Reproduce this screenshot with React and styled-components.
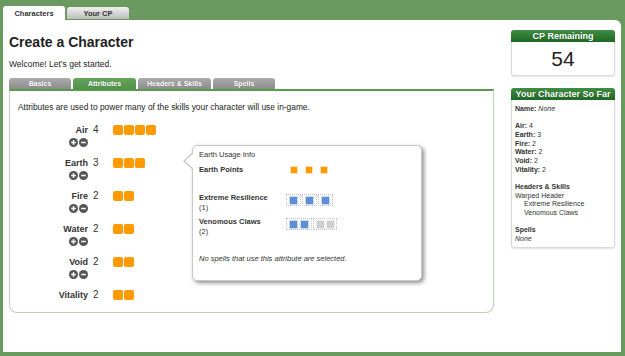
import React from 'react';
import styled, { createGlobalStyle } from 'styled-components';

const Global = createGlobalStyle`
  html, body { margin: 0; padding: 0; }
  body {
    background: #6a9a60;
    font-family: "Liberation Sans", Arial, sans-serif;
    color: #222;
    width: 625px;
    height: 356px;
    overflow: hidden;
  }
`;

const Page = styled.div`
  width: 625px;
  height: 356px;
  display: flex;
  flex-direction: column;
`;

const TopTabs = styled.div`
  height: 20px;
  display: flex;
  align-items: flex-end;
  gap: 2px;
  padding-left: 3px;
`;

const TopTab = styled.div`
  width: 62px;
  height: ${(p) => (p.$active ? 14 : 12)}px;
  margin-bottom: ${(p) => (p.$active ? 0 : 1)}px;
  border-radius: 3px 3px 0 0;
  background: ${(p) => (p.$active ? '#fff' : 'linear-gradient(#f0f0f0, #bdbdbd)')};
  font-size: 7.5px;
  font-weight: bold;
  color: #333;
  display: flex;
  align-items: center;
  justify-content: center;
`;

const Panel = styled.div`
  height: 332px;
  margin: 0 4px 0 3px;
  background: #fff;
  border-top-right-radius: 6px;
  display: flex;
  gap: 17px;
  padding: 10px 6px 0 6px;
  box-sizing: border-box;
`;

const Main = styled.div`
  width: 485px;
  display: flex;
  flex-direction: column;
`;

const Heading = styled.h1`
  margin: 4px 0 0;
  font-size: 14px;
  line-height: 16px;
  font-weight: bold;
  color: #1e1e1e;
`;

const Welcome = styled.p`
  margin: 8.5px 0 0;
  font-size: 8.5px;
  line-height: 11px;
`;

const Tabs = styled.div`
  margin-top: 8.5px;
  display: flex;
  gap: 2px;
  height: 11px;
`;

const Tab = styled.div`
  width: ${(p) => p.$w}px;
  height: 11px;
  border-radius: 3px 3px 0 0;
  background: ${(p) => (p.$active ? 'linear-gradient(#66a65d, #4f9146)' : 'linear-gradient(#acacac, #8c8c8c)')};
  color: #fff;
  font-size: 7px;
  font-weight: bold;
  display: flex;
  align-items: center;
  justify-content: center;
  text-shadow: 0 0 1px rgba(0, 0, 0, 0.3);
`;

const Box = styled.div`
  position: relative;
  height: 224px;
  box-sizing: border-box;
  border: 1px solid #bad4b3;
  border-top: 2px solid #5a9a50;
  border-radius: 0 0 8px 8px;
  padding-top: 11px;
`;

const Intro = styled.p`
  margin: 0 0 12px;
  padding-left: 8px;
  font-size: 8.4px;
  line-height: 10px;
`;

const AttrRow = styled.div`
  height: 33px;
  display: grid;
  grid-template-columns: 78px 25px 1fr;
  align-items: start;
`;

const LabelCell = styled.div`
  display: flex;
  flex-direction: column;
  align-items: flex-end;
`;

const AttrLabel = styled.div`
  font-size: 9px;
  font-weight: bold;
  line-height: 12px;
  color: #333;
`;

const Controls = styled.div`
  display: flex;
  gap: 1px;
  margin-top: 1.5px;
`;

const AttrValue = styled.div`
  padding-left: 5px;
  font-size: 10px;
  line-height: 12px;
  color: #333;
`;

const Pips = styled.div`
  display: flex;
  gap: 1px;
  margin-top: 1px;
`;

const Pip = styled.div`
  width: 10px;
  height: 10px;
  border-radius: 2px;
  background: #ff9a00;
`;

const Popover = styled.div`
  position: absolute;
  left: 182px;
  top: 54px;
  width: 230px;
  height: 136px;
  box-sizing: border-box;
  background: #fff;
  border: 1px solid #c8c8c8;
  border-radius: 5px;
  box-shadow: 2px 2px 4px rgba(0, 0, 0, 0.45);
  padding: 4px 6px;
  font-size: 7.5px;
  color: #333;

  &::before {
    content: '';
    position: absolute;
    left: -10px;
    top: 6px;
    border-style: solid;
    border-width: 9px 10px 9px 0;
    border-color: transparent #c8c8c8 transparent transparent;
  }
  &::after {
    content: '';
    position: absolute;
    left: -8.5px;
    top: 7px;
    border-style: solid;
    border-width: 8px 9px 8px 0;
    border-color: transparent #fff transparent transparent;
  }
`;

const PopTitle = styled.div`
  line-height: 10px;
`;

const PopRow = styled.div`
  display: grid;
  grid-template-columns: 87px auto;
  align-items: start;
  margin-top: ${(p) => p.$mt}px;
`;

const PopLabel = styled.div`
  line-height: 10px;
  b {
    font-weight: bold;
  }
`;

const PointSlots = styled.div`
  display: flex;
  height: 10px;
  align-items: center;
`;

const Slot = styled.div`
  width: ${(p) => p.$w}px;
  height: 100%;
  display: flex;
  align-items: center;
  justify-content: center;
`;

const Dot = styled.div`
  width: ${(p) => p.$s}px;
  height: ${(p) => p.$s}px;
  background: ${(p) => p.$c};
  box-shadow: 0 0 0 1px ${(p) => p.$halo};
`;

const Groups = styled.div`
  display: flex;
  gap: 1px;
  margin-top: 1px;
`;

const Group = styled.div`
  display: flex;
  height: 12px;
  border: 1px dotted #c4c4c4;
  box-sizing: border-box;
  padding: 0 1px;
`;

const NoSpells = styled.div`
  margin-top: 17px;
  font-style: italic;
  font-size: 7.5px;
  line-height: 10px;
  color: #333;
`;

const Side = styled.div`
  width: 104px;
  display: flex;
  flex-direction: column;
  gap: 12px;
`;

const Card = styled.div`
  background: #fff;
  border: 1px solid #dadada;
  border-radius: 3px;
  box-shadow: 0 1px 2px rgba(0, 0, 0, 0.12);
`;

const CardHeader = styled.div`
  height: 12px;
  line-height: 12px;
  margin: -1px -1px 0;
  border-radius: 3px 3px 0 0;
  background: linear-gradient(#3f8e42, #1f6826);
  color: #fff;
  font-size: 9px;
  font-weight: bold;
  text-align: center;
  text-shadow: 0 0 1px rgba(0, 0, 0, 0.4);
`;

const BigNumber = styled.div`
  height: 33px;
  line-height: 33px;
  text-align: center;
  font-size: 21px;
  color: #222;
`;

const Summary = styled.div`
  padding: 5px 3px 4px;
  font-size: 7px;
  line-height: 8.65px;
  color: #333;
`;

const Line = styled.div`
  padding-left: ${(p) => (p.$indent ? 9 : 0)}px;
  font-style: ${(p) => (p.$italic ? 'italic' : 'normal')};
  b {
    font-weight: bold;
  }
`;

const Gap = styled.div`
  height: 8.65px;
`;

const Bottom = styled.div`
  height: 4px;
`;

const CircleBtn = ({ minus }) => (
  <svg width="9" height="9" viewBox="0 0 9 9">
    <circle cx="4.5" cy="4.5" r="4.5" fill="#555" />
    <line x1="2.2" y1="4.5" x2="6.8" y2="4.5" stroke="#fff" strokeWidth="1.5" />
    {!minus && <line x1="4.5" y1="2.2" x2="4.5" y2="6.8" stroke="#fff" strokeWidth="1.5" />}
  </svg>
);

const attributes = [
  { name: 'Air', value: 4, controls: true },
  { name: 'Earth', value: 3, controls: true },
  { name: 'Fire', value: 2, controls: true },
  { name: 'Water', value: 2, controls: true },
  { name: 'Void', value: 2, controls: true },
  { name: 'Vitality', value: 2, controls: false },
];

const BLUE = '#5f8fd0';
const GRAY = '#cfcfcf';

export default function App() {
  return (
    <Page>
      <Global />
      <TopTabs>
        <TopTab $active>Characters</TopTab>
        <TopTab>Your CP</TopTab>
      </TopTabs>
      <Panel>
        <Main>
          <Heading>Create a Character</Heading>
          <Welcome>Welcome! Let&rsquo;s get started.</Welcome>
          <Tabs>
            <Tab $w={62}>Basics</Tab>
            <Tab $w={63} $active>Attributes</Tab>
            <Tab $w={73}>Headers &amp; Skills</Tab>
            <Tab $w={62}>Spells</Tab>
          </Tabs>
          <Box>
            <Intro>Attributes are used to power many of the skills your character will use in-game.</Intro>
            {attributes.map((a) => (
              <AttrRow key={a.name}>
                <LabelCell>
                  <AttrLabel>{a.name}</AttrLabel>
                  {a.controls && (
                    <Controls>
                      <CircleBtn />
                      <CircleBtn minus />
                    </Controls>
                  )}
                </LabelCell>
                <AttrValue>{a.value}</AttrValue>
                <Pips>
                  {Array.from({ length: a.value }).map((_, i) => (
                    <Pip key={i} />
                  ))}
                </Pips>
              </AttrRow>
            ))}
            <Popover>
              <PopTitle>Earth Usage Info</PopTitle>
              <PopRow $mt={5}>
                <PopLabel><b>Earth Points</b></PopLabel>
                <PointSlots>
                  {[0, 1, 2].map((i) => (
                    <Slot key={i} $w={15}>
                      <Dot $s={6} $c="#ff9a00" $halo="#ffe2b8" />
                    </Slot>
                  ))}
                </PointSlots>
              </PopRow>
              <PopRow $mt={18}>
                <PopLabel><b>Extreme Resilience</b><br />(1)</PopLabel>
                <Groups>
                  {[0, 1, 2].map((i) => (
                    <Group key={i}>
                      <Slot $w={11}><Dot $s={7} $c={BLUE} $halo="#c9d9ef" /></Slot>
                    </Group>
                  ))}
                </Groups>
              </PopRow>
              <PopRow $mt={4}>
                <PopLabel><b>Venomous Claws</b><br />(2)</PopLabel>
                <Groups>
                  <Group>
                    <Slot $w={11}><Dot $s={7} $c={BLUE} $halo="#c9d9ef" /></Slot>
                    <Slot $w={11}><Dot $s={7} $c={BLUE} $halo="#c9d9ef" /></Slot>
                  </Group>
                  <Group>
                    <Slot $w={10}><Dot $s={7} $c={GRAY} $halo="#eaeaea" /></Slot>
                    <Slot $w={10}><Dot $s={7} $c={GRAY} $halo="#eaeaea" /></Slot>
                  </Group>
                </Groups>
              </PopRow>
              <NoSpells>No spells that use this attribute are selected.</NoSpells>
            </Popover>
          </Box>
        </Main>
        <Side>
          <Card>
            <CardHeader>CP Remaining</CardHeader>
            <BigNumber>54</BigNumber>
          </Card>
          <Card>
            <CardHeader>Your Character So Far</CardHeader>
            <Summary>
              <Line><b>Name:</b> <i>None</i></Line>
              <Gap />
              <Line><b>Air:</b> 4</Line>
              <Line><b>Earth:</b> 3</Line>
              <Line><b>Fire:</b> 2</Line>
              <Line><b>Water:</b> 2</Line>
              <Line><b>Void:</b> 2</Line>
              <Line><b>Vitality:</b> 2</Line>
              <Gap />
              <Line><b>Headers &amp; Skills</b></Line>
              <Line>Warped Header</Line>
              <Line $indent>Extreme Resilience</Line>
              <Line $indent>Venomous Claws</Line>
              <Gap />
              <Line><b>Spells</b></Line>
              <Line $italic>None</Line>
            </Summary>
          </Card>
        </Side>
      </Panel>
      <Bottom />
    </Page>
  );
}
